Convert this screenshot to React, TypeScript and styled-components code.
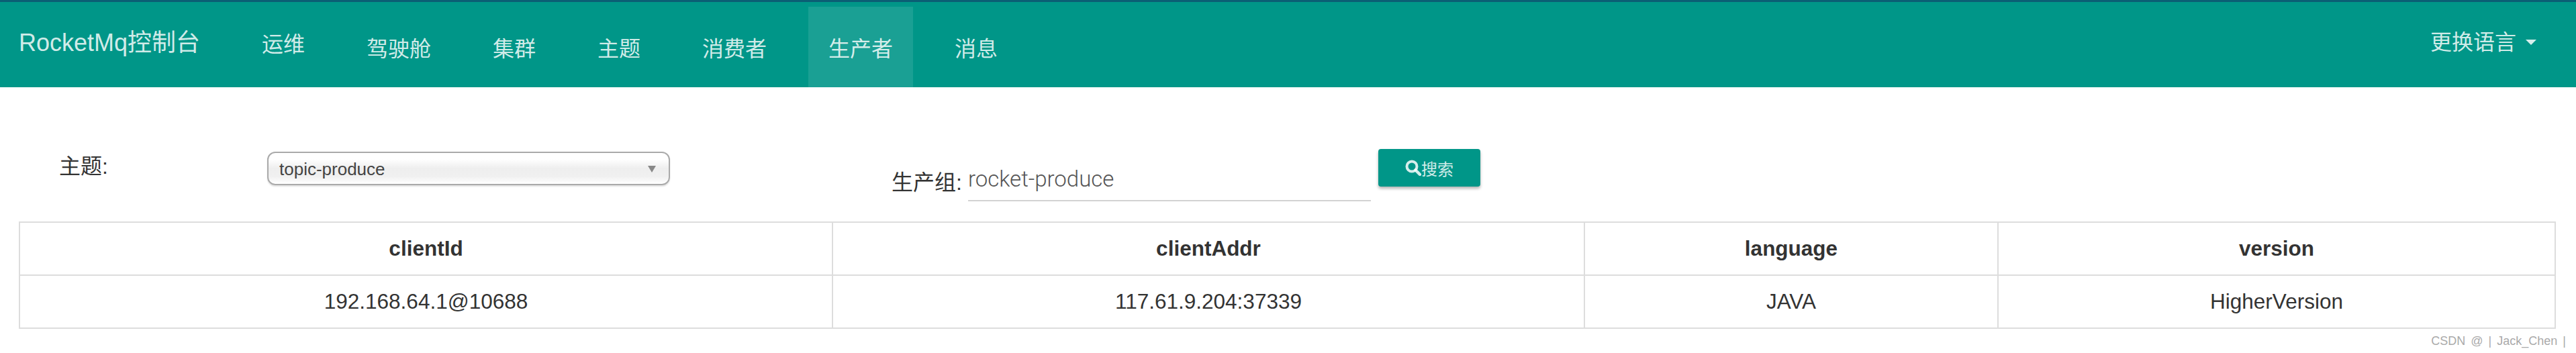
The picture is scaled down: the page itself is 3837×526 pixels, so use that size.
import { createGlobalStyle } from "styled-components";
import styled from "styled-components";

const GlobalStyle = createGlobalStyle`
  html, body {
    margin: 0;
    padding: 0;
    background: #fff;
    color: #333;
    font-family: "Liberation Sans", "Noto Sans CJK SC", sans-serif;
  }
`;

const Page = styled.div`
  position: relative;
  width: 3837px;
  height: 526px;
  overflow: hidden;
`;

const Navbar = styled.div`
  display: flex;
  align-items: flex-start;
  height: 127px;
  padding-left: 28px;
  padding-right: 59px;
  background-color: #009688;
  border-top: 3px solid #0b5e74;
  color: rgba(255, 255, 255, 0.84);
`;

const Brand = styled.div`
  width: 332px;
  margin-top: 37px;
  font-size: 36px;
  line-height: 48px;
  white-space: nowrap;
`;

const NavList = styled.ul`
  display: flex;
  gap: 32px;
  flex: 1;
  margin: 7px 0 0;
  padding: 0;
  list-style: none;
`;

const NavItem = styled.li<{ $active?: boolean; $raised?: boolean }>`
  height: ${(p) => (p.$raised ? "106px" : "120px")};
  padding: ${(p) => (p.$raised ? "0 30px 14px" : "0 30px")};
  display: flex;
  align-items: center;
  font-size: 32px;
  background-color: ${(p) => (p.$active ? "rgba(255, 255, 255, 0.1)" : "transparent")};
`;

const LangMenu = styled.div`
  display: flex;
  align-items: center;
  gap: 14px;
  margin-top: 36px;
  font-size: 32px;
  line-height: 48px;
`;

const Caret = styled.span`
  width: 0;
  height: 0;
  border-top: 8px solid rgba(255, 255, 255, 0.84);
  border-left: 8px solid transparent;
  border-right: 8px solid transparent;
`;

const FilterRow = styled.div`
  display: flex;
  align-items: flex-start;
  height: 200px;
  padding-left: 88px;
`;

const TopicField = styled.div`
  display: flex;
  align-items: center;
  width: 1240px;
  height: 50px;
  margin-top: 96px;
`;

const FieldLabel = styled.label`
  font-size: 32px;
  line-height: 44px;
  white-space: nowrap;
`;

const TopicLabel = styled(FieldLabel)`
  width: 310px;
  margin-top: -6px;
`;

const SelectBox = styled.div`
  position: relative;
  box-sizing: border-box;
  width: 600px;
  height: 50px;
  padding: 0 16px;
  border: 2px solid #aaa;
  border-radius: 12px;
  background: linear-gradient(to bottom, #fff 0%, #fff 20%, #eee 50%, #f0f0f0 75%, #fff 100%);
  box-shadow: 0 2px 2px rgba(0, 0, 0, 0.12);
  font-size: 26px;
  line-height: 48px;
  color: #444;
`;

const SelectArrow = styled.span`
  position: absolute;
  right: 19px;
  top: 19px;
  width: 0;
  height: 0;
  border-top: 10px solid #888;
  border-left: 6px solid transparent;
  border-right: 6px solid transparent;
`;

const GroupField = styled.div`
  display: flex;
  align-items: center;
  margin-top: 114px;
`;

const GroupInput = styled.div`
  box-sizing: border-box;
  width: 600px;
  height: 56px;
  margin-left: 9px;
  border-bottom: 2px solid #d2d2d2;
  font-family: "Roboto", "Liberation Sans", sans-serif;
  font-weight: 300;
  font-size: 33px;
  line-height: 46px;
  color: #555;
`;

const SearchButton = styled.button`
  display: flex;
  align-items: center;
  justify-content: center;
  width: 152px;
  height: 56px;
  margin-top: 92px;
  margin-left: 11px;
  padding: 0;
  border: none;
  border-radius: 4px;
  background-color: #009688;
  color: rgba(255, 255, 255, 0.84);
  font-family: inherit;
  font-size: 24px;
  box-shadow: 0 3px 4px rgba(0, 0, 0, 0.3);
`;

const Table = styled.table`
  width: 3779px;
  margin-left: 28px;
  border-collapse: collapse;
  table-layout: fixed;
  font-size: 31.5px;
  text-align: center;
  color: #333;
`;

const Th = styled.th`
  height: 77px;
  padding: 0;
  border: 2px solid #ddd;
  font-weight: bold;
`;

const Td = styled.td`
  height: 77px;
  padding: 0;
  border: 2px solid #ddd;
`;

const Watermark = styled.div`
  position: absolute;
  right: 15px;
  top: 497px;
  font-size: 18px;
  line-height: 22px;
  word-spacing: 3px;
  color: #aaa;
  white-space: nowrap;
`;

const navItems = ["驾驶舱", "集群", "主题", "消费者", "生产者", "消息"];
const columns = [
  { key: "clientId", value: "192.168.64.1@10688", width: 1211 },
  { key: "clientAddr", value: "117.61.9.204:37339", width: 1120 },
  { key: "language", value: "JAVA", width: 616 },
  { key: "version", value: "HigherVersion", width: 830 },
];

export default function App() {
  return (
    <Page>
      <GlobalStyle />
      <Navbar>
        <Brand>RocketMq控制台</Brand>
        <NavList>
          <NavItem $raised>运维</NavItem>
          {navItems.map((item) => (
            <NavItem key={item} $active={item === "生产者"}>
              {item}
            </NavItem>
          ))}
        </NavList>
        <LangMenu>
          更换语言
          <Caret />
        </LangMenu>
      </Navbar>
      <FilterRow>
        <TopicField>
          <TopicLabel>主题:</TopicLabel>
          <SelectBox>
            topic-produce
            <SelectArrow />
          </SelectBox>
        </TopicField>
        <GroupField>
          <FieldLabel>生产组:</FieldLabel>
          <GroupInput>rocket-produce</GroupInput>
        </GroupField>
        <SearchButton>
          <svg width="24" height="24" viewBox="0 0 24 24">
            <circle cx="10" cy="10" r="7.5" fill="none" stroke="currentColor" strokeWidth="4" />
            <path d="M15.5 15.5 L22 22" stroke="currentColor" strokeWidth="4.5" strokeLinecap="round" />
          </svg>
          搜索
        </SearchButton>
      </FilterRow>
      <Table>
        <colgroup>
          {columns.map((c) => (
            <col key={c.key} style={{ width: c.width }} />
          ))}
        </colgroup>
        <thead>
          <tr>
            {columns.map((c) => (
              <Th key={c.key}>{c.key}</Th>
            ))}
          </tr>
        </thead>
        <tbody>
          <tr>
            {columns.map((c) => (
              <Td key={c.key}>{c.value}</Td>
            ))}
          </tr>
        </tbody>
      </Table>
      <Watermark>CSDN @ | Jack_Chen |</Watermark>
    </Page>
  );
}
